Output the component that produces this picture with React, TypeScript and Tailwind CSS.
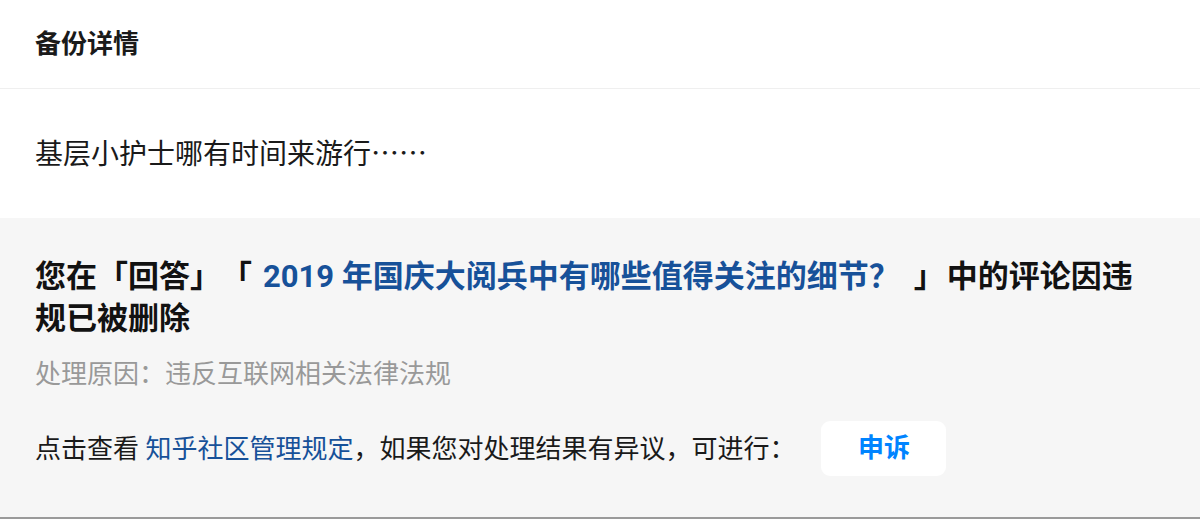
import React from "react";

const FONT = 'Roboto, "Noto Sans CJK SC", sans-serif';

export default function App() {
  return (
    <div
      className="w-[1200px] h-[519px] bg-white overflow-hidden flex flex-col [text-spacing-trim:space-all]"
      style={{ fontFamily: FONT }}
    >
      <div className="h-[89px] shrink-0 border-b border-[#efefef] flex items-center px-[35px]">
        <h1 className="text-[26px] font-bold text-[#1a1a1a] leading-none">备份详情</h1>
      </div>
      <div className="h-[129px] shrink-0 flex items-center px-[35px]">
        <p className="text-[28px] text-[#1a1a1a] leading-none">
          基层小护士哪有时间来游行<span className="[font-family:'Noto_Sans_CJK_SC',sans-serif]">……</span>
        </p>
      </div>
      <div className="flex-1 bg-[#f6f6f6] px-[35px] pt-[38px] border-b-2 border-[#9a9a9a]">
        <h2 className="pr-[15px] text-[31px] leading-[42px] font-bold text-[#121212]">
          您在「回答」「<a className="text-[#175199] ml-[11px] mr-[14px]">2019 年国庆大阅兵中有哪些值得关注的细节？</a><span className="mr-[2px]">」</span>中的评论因违规已被删除
        </h2>
        <p className="mt-[16px] text-[26px] leading-[36px] text-[#999999]">处理原因：违反互联网相关法律法规</p>
        <div className="mt-[29px] flex items-center">
          <p className="text-[26px] leading-[36px] text-[#1a1a1a]">
            点击查看 <a className="text-[#175199]">知乎社区管理规定</a>，如果您对处理结果有异议，可进行：
          </p>
          <button className="ml-[26px] w-[125px] h-[55px] rounded-[9px] bg-white text-[26px] font-bold text-[#0084ff] flex items-center justify-center">
            申诉
          </button>
        </div>
      </div>
    </div>
  );
}
